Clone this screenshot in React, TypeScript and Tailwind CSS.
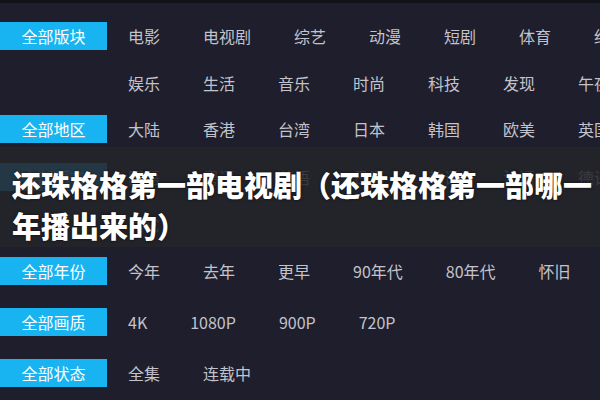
import React from 'react';

type Group = {
  label: string;
  lines: string[][];
  mt: string;
};

const groups: Group[] = [
  {
    label: '全部版块',
    mt: 'mt-[19px]',
    lines: [
      ['电影', '电视剧', '综艺', '动漫', '短剧', '体育', '纪录片'],
      ['娱乐', '生活', '音乐', '时尚', '科技', '发现', '午夜'],
    ],
  },
  {
    label: '全部地区',
    mt: 'mt-[18px]',
    lines: [['大陆', '香港', '台湾', '日本', '韩国', '欧美', '英国']],
  },
  {
    label: '全部语言',
    mt: 'mt-[20px]',
    lines: [
      ['国语', '粤语', '英语', '日语', '韩语', '法语', '德语'],
      ['其它'],
    ],
  },
  {
    label: '全部年份',
    mt: 'mt-[19px]',
    lines: [['今年', '去年', '更早', '90年代', '80年代', '怀旧']],
  },
  {
    label: '全部画质',
    mt: 'mt-[23px]',
    lines: [['4K', '1080P', '900P', '720P']],
  },
  {
    label: '全部状态',
    mt: 'mt-[23px]',
    lines: [['全集', '连载中']],
  },
];

export default function App() {
  return (
    <div
      className="relative w-full h-screen overflow-hidden bg-[#1e1e2c]"
      style={{ fontFamily: '"Noto Sans CJK SC", "Liberation Sans", sans-serif' }}
    >
      <div className="h-[3px] bg-[#12121b]" />

      {/* Filter rows */}
      <div className="flex flex-col">
        {groups.map((group) => (
          <div key={group.label} className={`flex items-start ${group.mt}`}>
            <div className="w-[107px] h-[28px] shrink-0 bg-[#17b4f1] text-white text-[16px] leading-[28px] text-center">
              {group.label}
            </div>
            <div className="ml-[21px] flex flex-col gap-y-[19px]">
              {group.lines.map((line, i) => (
                <div key={i} className="flex gap-x-[43px] whitespace-nowrap h-[28px] leading-[28px] text-[16px] text-[#c3c3cc]">
                  {line.map((item) => (
                    <span key={item}>{item}</span>
                  ))}
                </div>
              ))}
            </div>
          </div>
        ))}
      </div>

      {/* Title overlay */}
      <div className="absolute left-0 right-0 top-[147px] h-[100px] bg-[#25252b]/[0.87] pl-3 pt-[17px]">
        <h1 className="text-white text-[29px] leading-[41px] font-black whitespace-nowrap [text-shadow:0_0_3px_rgba(0,0,0,0.7)]">
          还珠格格第一部电视剧（还珠格格第一部哪一
          <br />
          年播出来的）
        </h1>
      </div>
    </div>
  );
}
